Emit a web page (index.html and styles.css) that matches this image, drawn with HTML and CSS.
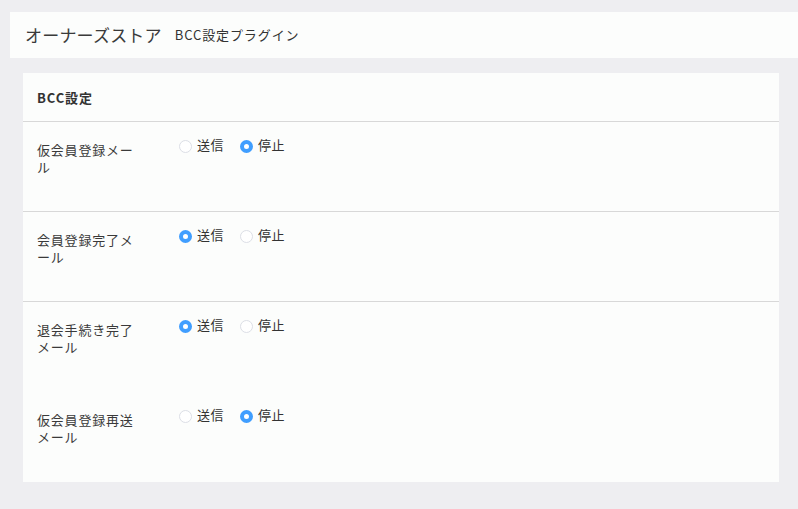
FILE: index.html
```html
<!DOCTYPE html>
<html lang="ja">
<head>
<meta charset="utf-8">
<link rel="stylesheet" href="styles.css">
</head>
<body>
<header class="topbar">
  <span class="title">オーナーズストア</span>
  <span class="subtitle">BCC設定プラグイン</span>
</header>
<main class="main">
  <section class="card">
    <div class="card-head">BCC設定</div>
    <div class="row">
      <div class="label">仮会員登録メール</div>
      <div class="radios">
        <label class="radio"><span class="dot"></span>送信</label>
        <label class="radio"><span class="dot on"></span>停止</label>
      </div>
    </div>
    <div class="row">
      <div class="label">会員登録完了メール</div>
      <div class="radios">
        <label class="radio"><span class="dot on"></span>送信</label>
        <label class="radio"><span class="dot"></span>停止</label>
      </div>
    </div>
    <div class="row plain">
      <div class="label">退会手続き完了メール</div>
      <div class="radios">
        <label class="radio"><span class="dot on"></span>送信</label>
        <label class="radio"><span class="dot"></span>停止</label>
      </div>
    </div>
    <div class="row plain">
      <div class="label">仮会員登録再送メール</div>
      <div class="radios">
        <label class="radio"><span class="dot"></span>送信</label>
        <label class="radio"><span class="dot on"></span>停止</label>
      </div>
    </div>
  </section>
</main>
</body>
</html>
```

FILE: styles.css
```css
html, body {
  margin: 0;
  padding: 0;
}
body {
  background: #eeeef1;
  font-family: "Noto Sans CJK JP", "Liberation Sans", sans-serif;
  color: #333;
  height: 509px;
  overflow: hidden;
}
.topbar {
  margin: 12px 0 0 10px;
  height: 46px;
  background: #fcfdfc;
  display: flex;
  align-items: center;
  padding-left: 15px;
  padding-bottom: 2px;
  box-sizing: border-box;
  gap: 13px;
}
.title {
  font-size: 17px;
  color: #3a3a3a;
  letter-spacing: 0.2px;
}
.subtitle {
  font-size: 13px;
  color: #333;
  letter-spacing: 0.9px;
}
.main {
  padding: 15px 19px 0 23px;
}
.card {
  background: #fcfdfc;
  height: 409px;
}
.card-head {
  height: 48px;
  border-bottom: 1px solid #d8d8d8;
  display: flex;
  align-items: center;
  padding-left: 14px;
  font-size: 13px;
  font-weight: bold;
  color: #333;
  letter-spacing: 0.9px;
}
.row {
  height: 89px;
  border-bottom: 1px solid #d8d8d8;
  display: flex;
  padding-left: 14px;
}
.row.plain {
  border-bottom: 1px solid transparent;
}
.label {
  width: 100px;
  padding-top: 19px;
  font-size: 13px;
  line-height: 17px;
  color: #3a3a3a;
  letter-spacing: 0.8px;
  margin-right: 41px;
}
.radios {
  display: flex;
  gap: 15px;
  padding-top: 14px;
  align-items: flex-start;
}
.radio {
  display: flex;
  align-items: center;
  font-size: 13px;
  line-height: 18px;
  color: #333;
  letter-spacing: 0.5px;
}
.dot {
  width: 13px;
  height: 13px;
  border-radius: 50%;
  border: 1px solid #dcdfe6;
  box-sizing: border-box;
  margin-right: 5px;
  margin-top: 3px;
  margin-left: 1px;
  background: #fff;
}
.dot.on {
  border: 4px solid #409eff;
  background: #fff;
}
```
